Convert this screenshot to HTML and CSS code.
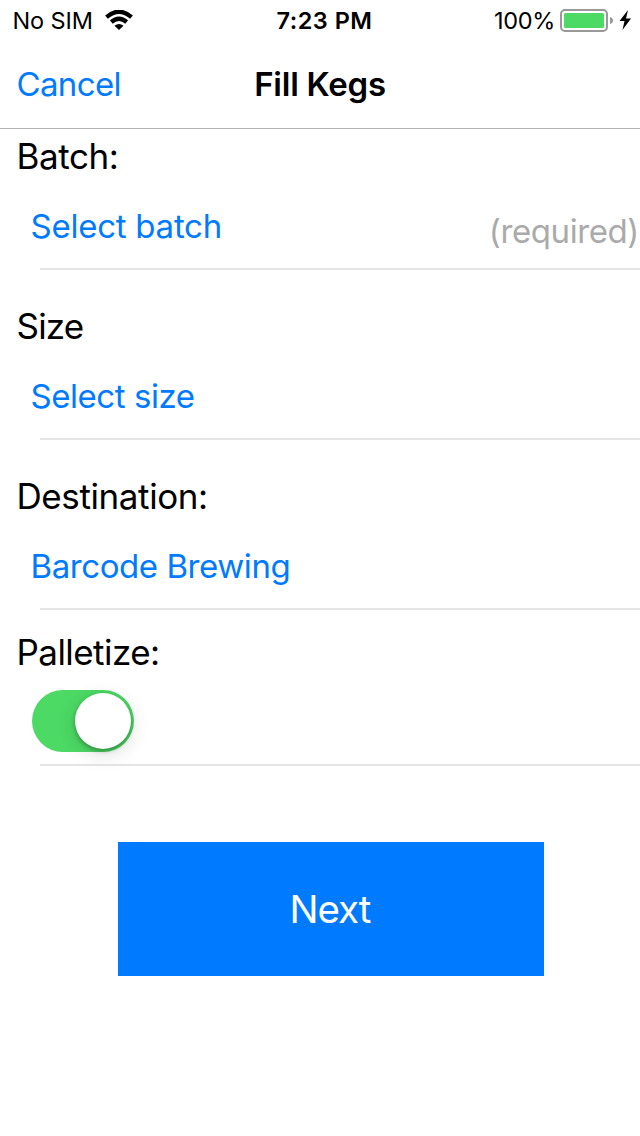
FILE: index.html
```html
<!DOCTYPE html>
<html lang="en">
<head>
<meta charset="utf-8">
<title>Fill Kegs</title>
<link rel="stylesheet" href="styles.css">
</head>
<body>
<header class="status">
  <div class="carrier"><span class="t-sim">No SIM</span>
    <svg class="wifi" width="28" height="20" viewBox="0 0 28 20"><path d="M14 20L9.500 15.800Q14 12.200 18.500 15.800Z"/><path class="arc" d="M6.300 12Q14 5.400 21.700 12M1.500 7.100Q14 -3.600 26.500 7.100"/></svg>
  </div>
  <div class="clock"><span>7:23 PM</span></div>
  <div class="power"><span class="t-pct">100%</span>
    <svg class="battery" width="54" height="24" viewBox="0 0 54 24"><rect class="shell" x="1" y="1" width="46" height="21" rx="4"/><rect class="charge" x="4" y="4" width="40" height="15" rx="1.5"/><path class="cap" d="M50 8Q53 9 53 11.500Q53 14 50 15Z"/></svg>
    <svg class="bolt" width="13" height="20" viewBox="0 0 13 20"><path d="M9 0L0.500 11H5.500L3.500 20L12 8.500H7Z"/></svg>
  </div>
</header>
<nav class="nav"><a class="cancel">Cancel</a><h1 class="title">Fill Kegs</h1></nav>
<main class="form">
  <section class="field"><h2 class="label l-batch">Batch:</h2><div class="row"><a class="value v-batch">Select batch</a><span class="required">(required)</span></div></section>
  <section class="field"><h2 class="label l-size">Size</h2><div class="row"><a class="value v-size">Select size</a></div></section>
  <section class="field"><h2 class="label l-dest">Destination:</h2><div class="row"><a class="value v-dest">Barcode Brewing</a></div></section>
  <section class="field pallet"><h2 class="label l-pal">Palletize:</h2><div class="row"><div class="switch"><div class="knob"></div></div></div></section>
  <button class="next">Next</button>
</main>
</body>
</html>
```
FILE: styles.css
```css
* { box-sizing: border-box; }
body { margin: 0; width: 640px; height: 1136px; overflow: hidden; background: #fff; color: #000; font-family: Inter, sans-serif; }
h1, h2 { margin: 0; font-weight: 400; }
.status { display: grid; grid-template-columns: 248px 152px 240px; height: 40px; font-size: 23.5px; line-height: 42px; white-space: nowrap; }
.carrier { display: flex; padding-left: 12.5px; }
.t-sim { width: 92.5px; letter-spacing: -0.1px; }
.wifi { margin-top: 10px; }
.arc { fill: none; stroke: #000; stroke-width: 4.3; }
.clock { padding-left: 1px; text-align: center; font-weight: 600; letter-spacing: 0.5px; }
.power { display: flex; padding-left: 94px; }
.t-pct { width: 66px; letter-spacing: -0.3px; }
.battery { margin-top: 9px; }
.shell { fill: none; stroke: #999; stroke-width: 2; }
.charge { fill: #4cd964; }
.cap { fill: #999; }
.bolt { margin: 10px 0 0 4.5px; }
.nav { display: grid; grid-template-columns: 200px 240px 200px; height: 89px; border-bottom: 1px solid #b2b2b2; line-height: 89px; }
.cancel { padding-left: 16.5px; color: #007aff; font-size: 33px; letter-spacing: -0.65px; }
.title { font-size: 33px; font-weight: 600; text-align: center; letter-spacing: -0.25px; }
.form { display: flex; flex-direction: column; }
.field { height: 170px; }
.label { padding-left: 16.5px; height: 56px; line-height: 54px; font-size: 35px; }
.l-batch { letter-spacing: -0.4px; }
.l-size { letter-spacing: -0.8px; }
.l-dest { letter-spacing: -0.4px; }
.l-pal { letter-spacing: -0.55px; }
.row { display: flex; justify-content: space-between; margin-left: 40px; height: 85px; border-bottom: 2px solid #e5e5e5; }
.value { margin-left: -9.5px; line-height: 82px; color: #007aff; font-size: 33px; }
.v-batch { letter-spacing: -0.25px; }
.v-size { letter-spacing: -0.45px; }
.v-dest { letter-spacing: -0.43px; }
.required { padding: 5px 1px 0 0; line-height: 82px; color: #aaa; font-size: 33px; letter-spacing: -0.4px; }
.pallet { margin-top: -14px; height: 203px; }
.switch { width: 102px; height: 62px; margin: 9px 0 0 -8px; padding: 3px; border-radius: 31px; background: #4cd964; }
.knob { width: 56px; height: 56px; margin-left: 40px; border-radius: 50%; background: #fff; box-shadow: 0 2px 4px rgba(0,0,0,.3), 0 5px 20px rgba(0,0,0,.14); }
.next { width: 426px; height: 134px; margin: 14px 0 0 118px; padding: 0 2px 1px 0; border: 0; background: #007aff; color: #fff; font: 38.5px Inter, sans-serif; letter-spacing: -1px; }
```
